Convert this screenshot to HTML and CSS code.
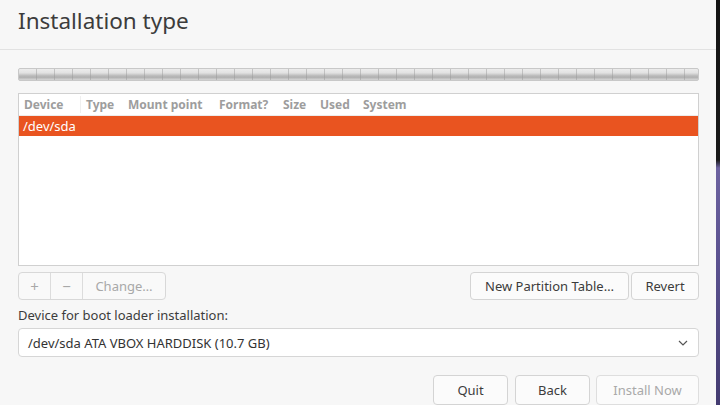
FILE: index.html
```html
<!DOCTYPE html>
<html>
<head>
<meta charset="utf-8">
<link rel="stylesheet" href="styles.css">
</head>
<body>
<div class="window">
  <div class="header"><h1 class="title">Installation type</h1></div>
  <div class="content">
    <div class="diskbar"></div>
    <div class="table">
      <div class="thead">
        <span class="th c-device">Device</span>
        <span class="th c-type">Type</span>
        <span class="th c-mount">Mount point</span>
        <span class="th c-format">Format?</span>
        <span class="th c-size">Size</span>
        <span class="th c-used">Used</span>
        <span class="th c-system">System</span>
      </div>
      <div class="row selected">/dev/sda</div>
    </div>
    <div class="toolrow">
      <div class="group">
        <span class="gbtn sq">+</span>
        <span class="gbtn sq">−</span>
        <span class="gbtn wide">Change…</span>
      </div>
      <div class="rightbtns">
        <span class="btn npt">New Partition Table…</span>
        <span class="btn revert">Revert</span>
      </div>
    </div>
    <div class="label">Device for boot loader installation:</div>
    <div class="combo">
      <span>/dev/sda ATA VBOX HARDDISK (10.7 GB)</span>
      <svg class="chev" width="10" height="6" viewBox="0 0 10 6"><path d="M1 1 L5 5 L9 1" fill="none" stroke="#555" stroke-width="1.2"/></svg>
    </div>
    <div class="actions">
      <span class="btn act quit">Quit</span>
      <span class="btn act back">Back</span>
      <span class="btn act install disabled">Install Now</span>
    </div>
  </div>
</div>
<div class="edge"></div>
</body>
</html>
```
FILE: styles.css
```css
html, body {
  margin: 0;
  padding: 0;
  width: 720px;
  height: 405px;
  overflow: hidden;
}
body {
  display: flex;
  font-family: "Noto Sans", "Open Sans", sans-serif;
  color: #3d3d3d;
  background: #f7f7f7;
}
.window {
  width: 716px;
  height: 405px;
  background: #f7f7f7;
  display: flex;
  flex-direction: column;
}
.edge {
  width: 4px;
  height: 405px;
  background: linear-gradient(to bottom, #141414 0, #1a1a1a 160px, #6d63a0 168px, #5b5290 260px, #433b70 405px);
}
.header {
  height: 51px;
  border-bottom: 1px solid #e2e2e2;
  box-sizing: border-box;
  display: flex;
  align-items: center;
  padding-left: 18px;
}
.title {
  margin: 0;
  font-weight: 400;
  font-size: 22.5px;
  color: #3c3c3c;
  position: relative;
  top: -4px;
}
.content {
  padding: 0 17px 0 18px;
  display: flex;
  flex-direction: column;
}
.diskbar {
  margin-top: 18px;
  height: 11px;
  border: 1px solid #c8c8c8;
  border-radius: 2px;
  background:
    repeating-linear-gradient(to right, transparent 0, transparent 17px, rgba(150,150,150,0.45) 17px, rgba(150,150,150,0.45) 18px),
    linear-gradient(to bottom, #ececec 0%, #e2e2e2 35%, #bdbdbd 60%, #b0b0b0 75%, #d6d6d6 100%);
}
.table {
  margin-top: 12px;
  height: 173px;
  box-sizing: border-box;
  background: #fff;
  border: 1px solid #d0d0d0;
}
.thead {
  height: 21px;
  display: flex;
  align-items: center;
  font-size: 12px;
  font-weight: 700;
  color: #9d9d9d;
  border-bottom: 1px solid #ececec;
}
.th { padding-left: 5px; box-sizing: border-box; }
.c-device { width: 62px; border-right: 1px solid #efefef; }
.c-type { width: 42px; }
.c-mount { width: 91px; }
.c-format { width: 64px; }
.c-size { width: 37px; }
.c-used { width: 43px; }
.c-system { width: 80px; }
.row {
  height: 20px;
  line-height: 20px;
  font-size: 13px;
  padding-left: 4px;
}
.selected {
  background: #e95420;
  color: #fff;
}
.toolrow {
  margin-top: 6px;
  display: flex;
  justify-content: space-between;
}
.group {
  display: flex;
  height: 28px;
  border: 1px solid #d8d8d8;
  border-radius: 4px;
  box-sizing: border-box;
  background: #f9f9f9;
}
.gbtn {
  display: flex;
  align-items: center;
  justify-content: center;
  color: #a8a8a8;
  font-size: 13px;
}
.sq { width: 31px; border-right: 1px solid #dcdcdc; font-size: 15px; }
.wide { width: 82px; }
.rightbtns { display: flex; gap: 2px; }
.btn {
  height: 28px;
  box-sizing: border-box;
  border: 1px solid #d4d4d4;
  border-radius: 4px;
  background: #fbfbfb;
  display: flex;
  align-items: center;
  justify-content: center;
  font-size: 13px;
  color: #3c3c3c;
}
.npt { width: 159px; }
.revert { width: 68px; }
.label {
  margin-top: 7px;
  font-size: 13px;
  color: #3c3c3c;
  height: 20px;
  line-height: 17px;
}
.combo {
  margin-top: 1px;
  height: 29px;
  box-sizing: border-box;
  border: 1px solid #d6d6d6;
  border-radius: 4px;
  background: #fff;
  display: flex;
  align-items: center;
  justify-content: space-between;
  padding: 0 10px 0 9px;
  font-size: 13px;
  color: #333;
}
.chev { margin-top: 1px; }
.actions {
  margin-top: 18px;
  display: flex;
  justify-content: flex-end;
}
.act { height: 30px; }
.quit { width: 75px; }
.back { width: 75px; margin-left: 7px; }
.install { width: 103px; margin-left: 6px; }
.disabled { color: #a9a9a9; border-color: #dedede; }
```
